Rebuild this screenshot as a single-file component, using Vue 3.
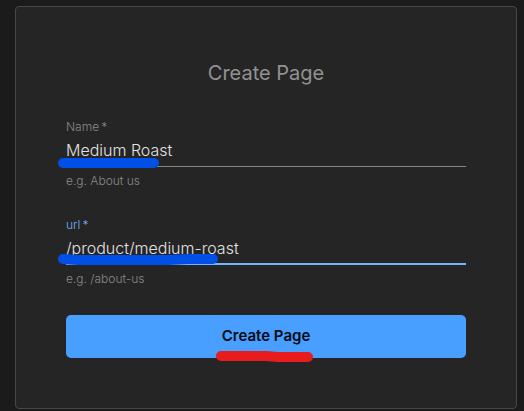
<script setup>
import { ref } from 'vue'

const name = ref('Medium Roast')
const url = ref('/product/medium-roast')
</script>

<template>
  <main class="page">
    <form class="card" @submit.prevent>
      <h1 class="title">Create Page</h1>

      <div class="field">
        <label class="label" for="page-name">Name&#8201;*</label>
        <input id="page-name" v-model="name" class="input" type="text" aria-describedby="name-hint" />
        <p id="name-hint" class="hint">e.g. About us</p>
        <svg class="mark mark-name" width="101" height="10" viewBox="0 0 101 10" aria-hidden="true">
          <path d="M5 5H96" stroke="#004fe6" stroke-width="10" stroke-linecap="round" />
        </svg>
      </div>

      <div class="field active">
        <label class="label" for="page-url">url&#8201;*</label>
        <input id="page-url" v-model="url" class="input" type="text" aria-describedby="url-hint" />
        <p id="url-hint" class="hint">e.g. /about-us</p>
        <svg class="mark mark-url" width="160" height="11" viewBox="0 0 160 11" aria-hidden="true">
          <path d="M5 5L20 6H110L130 5H155" fill="none" stroke="#004fe6" stroke-width="10" stroke-linecap="round" stroke-linejoin="round" />
        </svg>
      </div>

      <div class="actions">
        <button class="submit" type="submit">Create Page</button>
        <svg class="mark mark-submit" width="98" height="11" viewBox="0 0 98 11" aria-hidden="true">
          <path d="M5 5H50L62 6H92" fill="none" stroke="#e81c1c" stroke-width="10" stroke-linecap="round" stroke-linejoin="round" />
        </svg>
      </div>
    </form>
  </main>
</template>

<style>
body {
  margin: 0;
  background: #1b1b1b;
}
</style>

<style scoped>
.page {
  padding: 6px 7px 2px 15px;
  font-family: Inter, "Liberation Sans", sans-serif;
  font-weight: 300;
}

.card {
  display: flex;
  flex-direction: column;
  gap: 28px;
  padding: 50px;
  border: 1px solid #474747;
  border-radius: 4px;
  background: #252525;
}

.title {
  margin: 0 0 2px;
  color: #929292;
  font-size: 20px;
  font-weight: 400;
  line-height: 32px;
  text-align: center;
}

.field {
  position: relative;
  display: flex;
  flex-direction: column;
}

.label {
  color: #8a8a8a;
  font-size: 12px;
  line-height: 16px;
}

.input {
  box-sizing: border-box;
  width: 100%;
  height: 32px;
  padding: 0 0 1px;
  border: 0;
  border-bottom: 1px solid #858585;
  border-radius: 0;
  outline: 0;
  background: transparent;
  color: #e2e2e2;
  font: inherit;
  font-size: 16px;
}

.hint {
  margin: 6px 0 0;
  color: #8a8a8a;
  font-size: 12px;
  line-height: 16px;
}

.active .label {
  color: #73b0f8;
}

.active .input {
  padding-bottom: 0;
  border-bottom: 2px solid #73b5ff;
}

.actions {
  position: relative;
  display: flex;
}

.submit {
  flex: 1;
  height: 43px;
  padding: 0 0 2px;
  border: 0;
  border-radius: 5px;
  background: #489fff;
  color: #020a14;
  font: inherit;
  font-size: 15px;
  font-weight: 600;
  cursor: pointer;
}

.mark {
  position: absolute;
  pointer-events: none;
}

.mark-name {
  top: 39px;
  left: -8px;
}

.mark-url {
  top: 37px;
  left: -8px;
}

.mark-submit {
  top: 36px;
  left: calc(50% - 50px);
}
</style>
